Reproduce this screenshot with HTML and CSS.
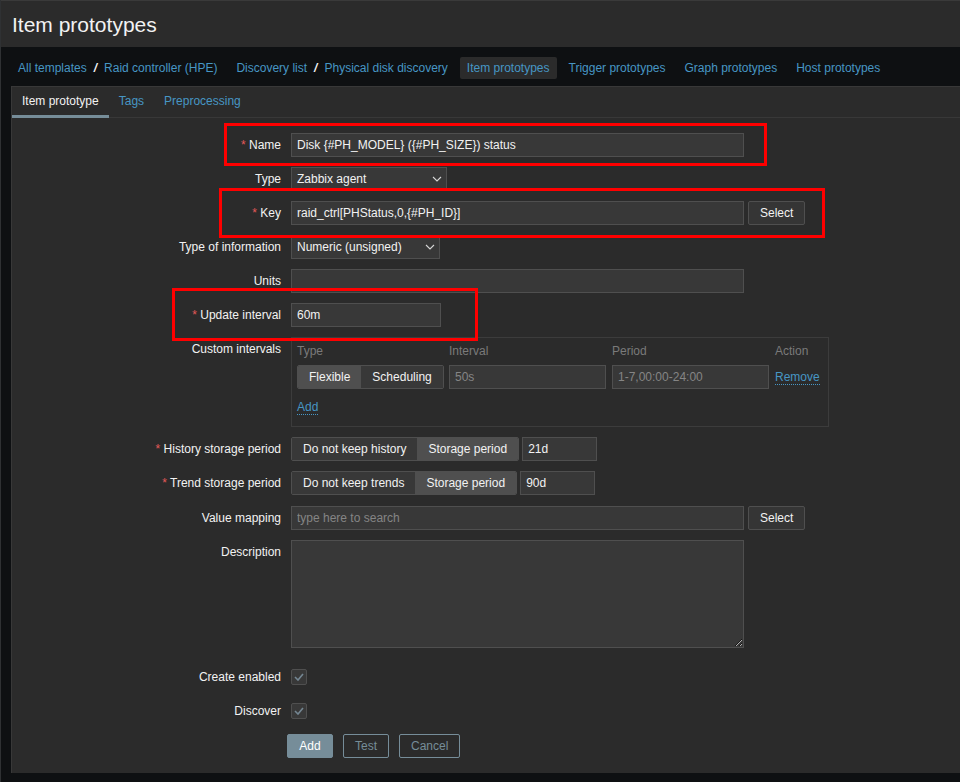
FILE: index.html
```html
<!DOCTYPE html>
<html lang="en">
<head>
<meta charset="utf-8">
<title>Item prototypes</title>
<link rel="stylesheet" href="styles.css">
</head>
<body>
<div class="page">
  <header class="header"><h1>Item prototypes</h1></header>
  <nav class="nav">
    <ul class="nav-list">
      <li class="nav-item"><a href="#">All templates</a><span class="sep">/</span><a href="#">Raid controller (HPE)</a></li>
      <li class="nav-item"><a href="#">Discovery list</a><span class="sep">/</span><a href="#">Physical disk discovery</a></li>
      <li class="nav-item selected"><a href="#">Item prototypes</a></li>
      <li class="nav-item"><a href="#">Trigger prototypes</a></li>
      <li class="nav-item"><a href="#">Graph prototypes</a></li>
      <li class="nav-item"><a href="#">Host prototypes</a></li>
    </ul>
  </nav>
  <main class="panel">
    <ul class="tabs">
      <li class="tab active">Item prototype</li>
      <li class="tab">Tags</li>
      <li class="tab">Preprocessing</li>
    </ul>
    <form class="form">
      <label class="lbl req">Name</label>
      <div class="ctl"><input class="input w-wide" type="text" value="Disk {#PH_MODEL} ({#PH_SIZE}) status"></div>

      <label class="lbl">Type</label>
      <div class="ctl"><div class="select w-type"><span>Zabbix agent</span><svg class="chev" width="10" height="6" viewBox="0 0 10 6"><polyline points="1,1 5,5 9,1" fill="none" stroke="#d6d6d6" stroke-width="1.1"/></svg></div></div>

      <label class="lbl req">Key</label>
      <div class="ctl"><input class="input w-wide" type="text" value="raid_ctrl[PHStatus,0,{#PH_ID}]"><button type="button" class="btn-alt">Select</button></div>

      <label class="lbl">Type of information</label>
      <div class="ctl"><div class="select w-info"><span>Numeric (unsigned)</span><svg class="chev" width="10" height="6" viewBox="0 0 10 6"><polyline points="1,1 5,5 9,1" fill="none" stroke="#d6d6d6" stroke-width="1.1"/></svg></div></div>

      <label class="lbl">Units</label>
      <div class="ctl"><input class="input w-wide" type="text" value=""></div>

      <label class="lbl req">Update interval</label>
      <div class="ctl"><input class="input w-interval" type="text" value="60m"></div>

      <label class="lbl">Custom intervals</label>
      <div class="ctl">
        <div class="intervals">
          <div class="int-grid">
            <div class="int-head">Type</div>
            <div class="int-head">Interval</div>
            <div class="int-head">Period</div>
            <div class="int-head">Action</div>
            <div class="radio"><span class="on">Flexible</span><span>Scheduling</span></div>
            <div><input class="input w-int" type="text" placeholder="50s"></div>
            <div><input class="input w-int" type="text" placeholder="1-7,00:00-24:00"></div>
            <div class="int-action"><a href="#" class="dlink">Remove</a></div>
          </div>
          <div class="int-add"><a href="#" class="dlink">Add</a></div>
        </div>
      </div>

      <label class="lbl req">History storage period</label>
      <div class="ctl"><div class="radio"><span>Do not keep history</span><span class="on">Storage period</span></div><input class="input w-period" type="text" value="21d"></div>

      <label class="lbl req">Trend storage period</label>
      <div class="ctl"><div class="radio"><span>Do not keep trends</span><span class="on">Storage period</span></div><input class="input w-period" type="text" value="90d"></div>

      <label class="lbl row-shift">Value mapping</label>
      <div class="ctl row-shift"><input class="input w-wide" type="text" placeholder="type here to search"><button type="button" class="btn-alt">Select</button></div>

      <label class="lbl">Description</label>
      <div class="ctl"><textarea class="textarea"></textarea></div>

      <label class="lbl">Create enabled</label>
      <div class="ctl"><span class="checkbox"><svg width="10" height="8" viewBox="0 0 10 8"><polyline points="1,4 4,7 9,1" fill="none" stroke="#748692" stroke-width="1.6"/></svg></span></div>

      <label class="lbl">Discover</label>
      <div class="ctl"><span class="checkbox"><svg width="10" height="8" viewBox="0 0 10 8"><polyline points="1,4 4,7 9,1" fill="none" stroke="#748692" stroke-width="1.6"/></svg></span></div>

      <div class="spacer"></div>
      <div class="ctl buttons">
        <button type="button" class="btn btn-main">Add</button>
        <button type="button" class="btn btn-ghost">Test</button>
        <button type="button" class="btn btn-ghost">Cancel</button>
      </div>
    </form>
  </main>

  <div class="mark mark-name"></div>
  <div class="mark mark-key"></div>
  <div class="mark mark-update"></div>
</div>
</body>
</html>
```
FILE: styles.css
```css
* { box-sizing: border-box; }

body {
  margin: 0;
  background: #0e1012;
  font-family: "Liberation Sans", Arial, sans-serif;
  font-size: 12px;
  color: #f2f2f2;
}

a { color: #4796c4; text-decoration: none; }

.page {
  position: relative;
  width: 960px;
  height: 782px;
  overflow: hidden;
  border-left: 1px solid #2f3133;
}

/* header */
.header {
  height: 47px;
  background: #2b2b2b;
  border-top: 1px solid #3a3a3a;
  padding-left: 11px;
  display: flex;
  align-items: center;
}
.header h1 {
  margin: 0;
  font-size: 21px;
  font-weight: normal;
  color: #f2f2f2;
  padding-top: 2px;
}

/* breadcrumb / nav */
.nav {
  height: 39px;
  padding: 3px 0 0 10px;
  display: flex;
  align-items: center;
}
.nav-list {
  list-style: none;
  margin: 0;
  padding: 0;
  display: flex;
  align-items: center;
}
.nav-item {
  height: 22px;
  line-height: 22px;
  padding: 0 7px;
  margin-right: 5px;
  border-radius: 2px;
  white-space: nowrap;
}
.nav-item.selected { background: #2b2b2b; }
.sep {
  color: #f2f2f2;
  margin: 0 7px;
  font-style: italic;
  font-weight: bold;
}

/* panel */
.panel {
  margin-left: 10px;
  height: 687px;
  background: #2b2b2b;
  border-left: 1px solid #383838;
  border-top: 1px solid #383838;
}

.tabs {
  list-style: none;
  margin: 0;
  padding: 0;
  display: flex;
  height: 31px;
  border-bottom: 1px solid #383838;
}
.tab {
  height: 31px;
  line-height: 29px;
  padding: 0 10px;
  color: #4796c4;
  border-bottom: 3px solid transparent;
}
.tab.active {
  color: #f2f2f2;
  border-bottom-color: #768d99;
}

/* form */
.form {
  display: grid;
  grid-template-columns: 269px 1fr;
  column-gap: 10px;
  row-gap: 10px;
  padding-top: 15px;
}
.lbl {
  line-height: 24px;
  text-align: right;
  white-space: nowrap;
  color: #f2f2f2;
}
.lbl.req::before {
  content: "* ";
  color: #e45959;
}
.ctl {
  display: flex;
  align-items: center;
  min-height: 24px;
}
.row-shift { margin-top: 1px; }

.input {
  height: 24px;
  background: #383838;
  border: 1px solid #4f4f4f;
  color: #f2f2f2;
  font-family: "Liberation Sans", Arial, sans-serif;
  font-size: 12px;
  padding: 0 5px;
  margin: 0;
  border-radius: 0;
  outline: none;
}
.input::placeholder { color: #858585; opacity: 1; }
.w-wide { width: 453px; }
.w-interval { width: 150px; }
.w-int { width: 157px; }
.w-period { width: 75px; margin-left: 3px; }

.select {
  height: 24px;
  background: #383838;
  border: 1px solid #4f4f4f;
  display: flex;
  align-items: center;
  justify-content: space-between;
  padding: 0 4px 0 5px;
}
.w-type { width: 156px; }
.w-info { width: 149px; }
.chev { display: block; }

.btn-alt {
  height: 24px;
  margin: 0 0 0 4px;
  padding: 0 11px;
  background: #353535;
  border: 1px solid #4f4f4f;
  border-radius: 2px;
  color: #f2f2f2;
  font-family: "Liberation Sans", Arial, sans-serif;
  font-size: 12px;
}

/* custom intervals */
.intervals {
  width: 538px;
  border: 1px solid #3c3c3c;
  padding: 5px 5px 12px 5px;
}
.int-grid {
  display: grid;
  grid-template-columns: 152px 163px 163px auto;
  row-gap: 6px;
}
.int-head {
  line-height: 16px;
  color: #7a7a7a;
}
.int-action { display: flex; align-items: center; }
.int-add {
  margin-top: 11px;
  line-height: 14px;
}
.dlink {
  border-bottom: 1px dotted #4796c4;
  line-height: 14px;
}

.radio {
  display: flex;
  height: 24px;
  border: 1px solid #4f4f4f;
  border-radius: 2px;
  overflow: hidden;
  width: max-content;
}
.radio span {
  padding: 0 11px;
  line-height: 22px;
  background: #383838;
  white-space: nowrap;
}
.radio span.on { background: #4f4f4f; }

.textarea {
  width: 453px;
  height: 108px;
  margin: 0 0 7px 0;
  background: #383838;
  border: 1px solid #4f4f4f;
  color: #f2f2f2;
  border-radius: 0;
  color-scheme: dark;
  resize: both;
  display: block;
}
.ctl:has(.textarea) { align-items: flex-start; }

.checkbox {
  width: 16px;
  height: 16px;
  background: #383838;
  border: 1px solid #4f4f4f;
  border-radius: 2px;
  display: flex;
  align-items: center;
  justify-content: center;
}

.buttons {
  margin-left: -4px;
  margin-top: 1px;
  gap: 10px;
}
.btn {
  height: 24px;
  min-width: 46px;
  padding: 0 11px;
  border-radius: 2px;
  font-family: "Liberation Sans", Arial, sans-serif;
  font-size: 12px;
  margin: 0;
}
.btn-main {
  background: #768d99;
  border: 1px solid #768d99;
  color: #ffffff;
}
.btn-ghost {
  background: transparent;
  border: 1px solid #768d99;
  color: #768d99;
}

/* red annotation boxes */
.mark {
  position: absolute;
  border: 3px solid #ff0000;
  pointer-events: none;
}
.mark-name { left: 223px; top: 123px; width: 543px; height: 43px; }
.mark-key { left: 218px; top: 188px; width: 606px; height: 50px; }
.mark-update { left: 171px; top: 288px; width: 306px; height: 53px; }
```
